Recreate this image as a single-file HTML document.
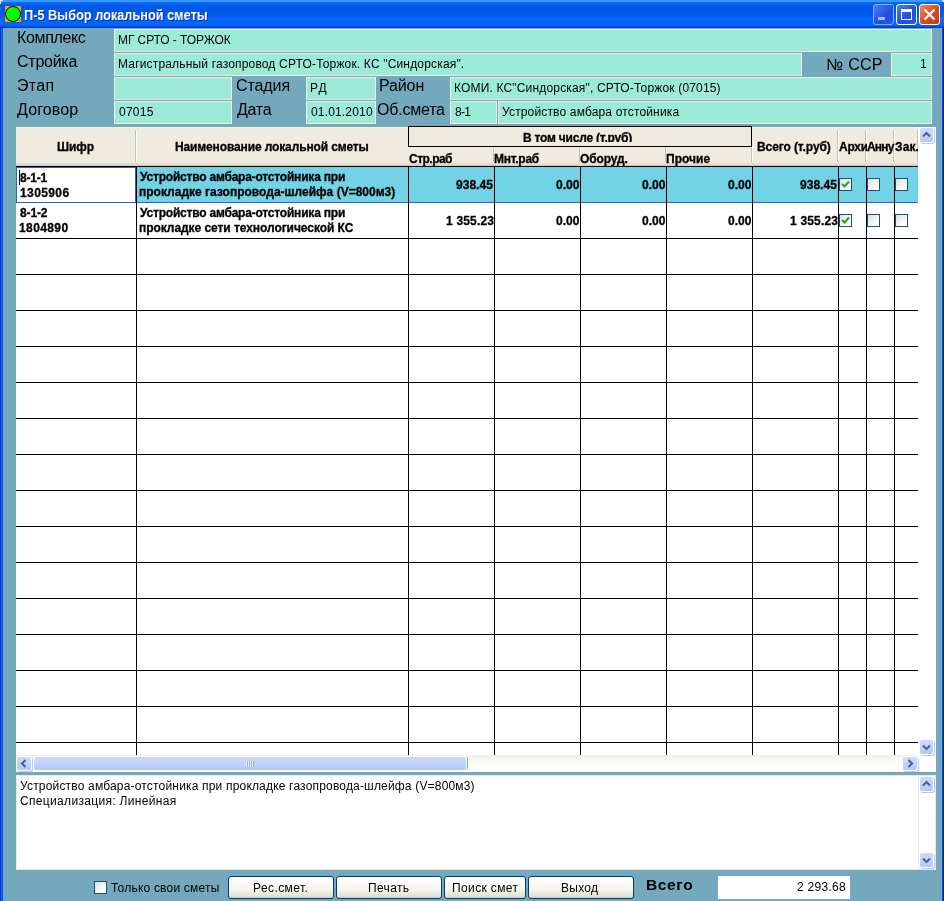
<!DOCTYPE html>
<html lang="ru"><head><meta charset="utf-8"><title>П-5 Выбор локальной сметы</title>
<style>
*{box-sizing:border-box;margin:0;padding:0}
html,body{width:944px;height:901px;overflow:hidden;background:#74a9bd}
body{position:relative;font-family:"Liberation Sans",sans-serif;font-size:12px;color:#000}
.abs,.abs *{position:absolute}
.t{position:absolute;white-space:pre;will-change:transform}
#title{left:0;top:0;width:944px;height:28px;background:linear-gradient(#3c96fd 0,#3c96fd 1.5px,#0270f8 2.5px,#0260ee 4px,#0058e4 6px,#0058e4 12px,#005cf0 15px,#0066fc 19px,#0066fc 25px,#0052e2 26.5px,#003cd0 27.5px,#003cd0 28px)}
#lb{left:0;top:28px;width:3px;height:873px;background:linear-gradient(90deg,#0428dc 0,#0428dc 1px,#0e6af0 1px,#0e6af0 2px,#0654e2 2px)}
#rb{left:942px;top:28px;width:2px;height:873px;background:linear-gradient(90deg,#0a45e0 0,#0a45e0 1px,#001ea8 1px)}
.fld{background:#9cebd7;border:1px solid #f0ece6;height:23px}
.tb{top:4px;width:21px;height:21px;border:1px solid #fff;border-radius:3px}
.vl{width:1px;background:#000}
.hl{height:1px;background:#000}
.cb{width:13px;height:13px;border:1px solid #1c5180;background:linear-gradient(135deg,#dcdcd7,#fff 75%)}
.btn{top:876px;height:23px;border:1px solid #003c74;border-radius:3px;background:linear-gradient(#fff,#f6f5f0 60%,#e4e1d6 90%,#d6d0c5)}
.sb{width:14px;height:14px;background:linear-gradient(#ccdafe,#c2d3fc 50%,#b1c7fa);border-radius:2px;box-shadow:0 0 0 1px #fff,1px 1px 0 1px #b4c9f3}
</style></head><body>

<div class="abs" id="title"></div><div class="abs" id="lb"></div><div class="abs" id="rb"></div>
<div class="abs" style="left:0;top:0;width:3px;height:1px;background:#d4e0f8"></div><div class="abs" style="left:0;top:1px;width:2px;height:1px;background:#d4e0f8"></div><div class="abs" style="left:0;top:2px;width:1px;height:2px;background:#d4e0f8"></div><div class="abs" style="left:942px;top:0;width:2px;height:1px;background:#d4e8f0"></div><div class="abs" style="left:943px;top:1px;width:1px;height:1px;background:#d4e8f0"></div>
<svg class="abs" style="left:5px;top:6px" width="16" height="16"><rect width="16" height="16" fill="#ff9a10"/><circle cx="8" cy="8" r="7.5" fill="#00ff00" stroke="#000" stroke-width="1"/></svg>
<div class="abs tb" style="left:873px;border-color:#8fabf5;background:linear-gradient(135deg,#4a80f8,#1c4ee0 60%,#2458ec)"><div style="left:4px;top:12px;width:7px;height:3px;background:#b0b8f0"></div></div>
<div class="abs tb" style="left:896px;background:linear-gradient(135deg,#4a80f8,#1c4ee0 60%,#2458ec)"><div style="left:4px;top:4px;width:11px;height:11px;border:1px solid #fff;border-top-width:3px"></div></div>
<div class="abs tb" style="left:919px;background:linear-gradient(135deg,#ee8a64,#de4a1e 55%,#c4340e)"><svg style="left:0;top:0" width="19" height="19"><path d="M4.5 4.5L14.5 14.5M14.5 4.5L4.5 14.5" stroke="#fff" stroke-width="2.2"/></svg></div>
<div class="abs fld" style="left:114px;top:29px;width:818px"></div>
<div class="abs fld" style="left:114px;top:53px;width:688px"></div>
<div class="abs fld" style="left:891px;top:53px;width:41px"></div>
<div class="abs fld" style="left:114px;top:77px;width:118px"></div>
<div class="abs fld" style="left:306px;top:77px;width:70px"></div>
<div class="abs fld" style="left:450px;top:77px;width:482px"></div>
<div class="abs fld" style="left:114px;top:101px;width:118px"></div>
<div class="abs fld" style="left:306px;top:101px;width:70px"></div>
<div class="abs fld" style="left:450px;top:101px;width:47px"></div>
<div class="abs fld" style="left:498px;top:101px;width:434px"></div>
<div class="abs" style="left:16px;top:127px;width:920px;height:645px;background:#fff"></div>
<div class="abs" style="left:16px;top:127px;width:902px;height:39px;background:linear-gradient(#faf4e0 0,#efebde 1px,#efebde 35px,#e3dece 37px,#cfc9b6 39px)"></div>
<div class="abs" style="left:137px;top:167px;width:781px;height:35px;background:#72d2e6"></div>
<div class="abs hl" style="left:16px;top:238px;width:902px"></div>
<div class="abs hl" style="left:16px;top:274px;width:902px"></div>
<div class="abs hl" style="left:16px;top:310px;width:902px"></div>
<div class="abs hl" style="left:16px;top:346px;width:902px"></div>
<div class="abs hl" style="left:16px;top:382px;width:902px"></div>
<div class="abs hl" style="left:16px;top:418px;width:902px"></div>
<div class="abs hl" style="left:16px;top:454px;width:902px"></div>
<div class="abs hl" style="left:16px;top:490px;width:902px"></div>
<div class="abs hl" style="left:16px;top:526px;width:902px"></div>
<div class="abs hl" style="left:16px;top:562px;width:902px"></div>
<div class="abs hl" style="left:16px;top:598px;width:902px"></div>
<div class="abs hl" style="left:16px;top:634px;width:902px"></div>
<div class="abs hl" style="left:16px;top:670px;width:902px"></div>
<div class="abs hl" style="left:16px;top:706px;width:902px"></div>
<div class="abs hl" style="left:16px;top:742px;width:902px"></div>
<div class="abs hl" style="left:16px;top:778px;width:902px"></div>
<div class="abs hl" style="left:16px;top:166px;width:902px"></div>
<div class="abs hl" style="left:16px;top:202px;width:902px;background:#2e5fd0"></div>
<div class="abs vl" style="left:136px;top:167px;height:588px"></div>
<div class="abs vl" style="left:408px;top:167px;height:588px"></div>
<div class="abs vl" style="left:494px;top:167px;height:588px"></div>
<div class="abs vl" style="left:580px;top:167px;height:588px"></div>
<div class="abs vl" style="left:666px;top:167px;height:588px"></div>
<div class="abs vl" style="left:752px;top:167px;height:588px"></div>
<div class="abs vl" style="left:838px;top:167px;height:588px"></div>
<div class="abs vl" style="left:866px;top:167px;height:588px"></div>
<div class="abs vl" style="left:894px;top:167px;height:588px"></div>
<div class="abs" style="left:135px;top:130px;width:2px;height:32px;border-left:1px solid #c5c2b2;border-right:1px solid #fff"></div>
<div class="abs" style="left:837px;top:130px;width:2px;height:32px;border-left:1px solid #c5c2b2;border-right:1px solid #fff"></div>
<div class="abs" style="left:865px;top:130px;width:2px;height:32px;border-left:1px solid #c5c2b2;border-right:1px solid #fff"></div>
<div class="abs" style="left:893px;top:130px;width:2px;height:32px;border-left:1px solid #c5c2b2;border-right:1px solid #fff"></div>
<div class="abs" style="left:917px;top:130px;width:2px;height:32px;border-left:1px solid #c5c2b2;border-right:1px solid #fff"></div>
<div class="abs" style="left:493px;top:147px;width:2px;height:15px;border-left:1px solid #c5c2b2;border-right:1px solid #fff"></div>
<div class="abs" style="left:579px;top:147px;width:2px;height:15px;border-left:1px solid #c5c2b2;border-right:1px solid #fff"></div>
<div class="abs" style="left:665px;top:147px;width:2px;height:15px;border-left:1px solid #c5c2b2;border-right:1px solid #fff"></div>
<div class="abs" style="left:751px;top:147px;width:2px;height:15px;border-left:1px solid #c5c2b2;border-right:1px solid #fff"></div>
<div class="abs" style="left:408px;top:126px;width:344px;height:21px;border:1px solid #000;background:#efebde"></div>
<div class="abs" style="left:16px;top:167px;width:120px;height:36px;background:#fff;border:1px solid #2e5fd0"></div>
<div class="abs" style="left:19px;top:170px;width:1px;height:15px;background:#000"></div>
<div class="abs cb" style="left:839px;top:178px"><svg style="left:1px;top:1px" width="9" height="9"><path d="M1 4L3.5 6.5L8 1.5" stroke="#21a121" stroke-width="2" fill="none"/></svg></div>
<div class="abs cb" style="left:867px;top:178px"></div>
<div class="abs cb" style="left:895px;top:178px"></div>
<div class="abs cb" style="left:839px;top:214px"><svg style="left:1px;top:1px" width="9" height="9"><path d="M1 4L3.5 6.5L8 1.5" stroke="#21a121" stroke-width="2" fill="none"/></svg></div>
<div class="abs cb" style="left:867px;top:214px"></div>
<div class="abs cb" style="left:895px;top:214px"></div>
<div class="abs" style="left:16px;top:755px;width:902px;height:17px;background:linear-gradient(#f1efe8,#fbfaf7 40%,#fff)"></div>
<div class="abs sb" style="left:920px;top:128px;width:13px;height:14px"><svg style="left:0;top:0" width="13" height="14"><path d="M3 8.5L6.5 5L10 8.5" stroke="#4d6185" stroke-width="2" fill="none"/></svg></div>
<div class="abs sb" style="left:920px;top:740px;width:13px;height:14px"><svg style="left:0;top:0" width="13" height="14"><path d="M3 5.5L6.5 9L10 5.5" stroke="#4d6185" stroke-width="2" fill="none"/></svg></div>
<div class="abs sb" style="left:17px;top:757px;width:14px;height:13px"><svg style="left:0;top:0" width="14" height="13"><path d="M8.5 3L5 6.5L8.5 10" stroke="#4d6185" stroke-width="2" fill="none"/></svg></div>
<div class="abs sb" style="left:903px;top:757px;width:14px;height:13px"><svg style="left:0;top:0" width="14" height="13"><path d="M5.5 3L9 6.5L5.5 10" stroke="#4d6185" stroke-width="2" fill="none"/></svg></div>
<div class="abs sb" style="left:34px;top:757px;width:432px;height:13px;box-shadow:0 0 0 1px #fff,2px 0 0 0 #86a4de"><div style="left:212px;top:4px;width:8px;height:6px;background:repeating-linear-gradient(90deg,#eef4fe 0 1px,#8cb0f8 1px 2px)"></div></div>
<div class="abs" style="left:16px;top:775px;width:920px;height:95px;background:#fff;border:1px solid #ece9d8"></div>
<div class="abs" style="left:918px;top:776px;width:1px;height:93px;background:#eeede5"></div>
<div class="abs sb" style="left:920px;top:777px;width:13px;height:14px"><svg style="left:0;top:0" width="13" height="14"><path d="M3 8.5L6.5 5L10 8.5" stroke="#4d6185" stroke-width="2" fill="none"/></svg></div>
<div class="abs sb" style="left:920px;top:853px;width:13px;height:14px"><svg style="left:0;top:0" width="13" height="14"><path d="M3 5.5L6.5 9L10 5.5" stroke="#4d6185" stroke-width="2" fill="none"/></svg></div>
<div class="abs cb" style="left:94px;top:881px"></div>
<div class="abs btn" style="left:228px;width:106px"></div>
<div class="abs btn" style="left:336px;width:106px"></div>
<div class="abs btn" style="left:444px;width:82px"></div>
<div class="abs btn" style="left:528px;width:106px"></div>
<div class="abs" style="left:718px;top:876px;width:132px;height:23px;background:#fff"></div>
<div class="t" style="left:23.62px;top:5.00px;font-size:14.5px;line-height:20px;font-weight:bold;color:#fff;text-shadow:1px 1px 0 #0a2b8c;transform:scaleX(0.8792);transform-origin:0 0">П-5 Выбор локальной сметы</div>
<div class="t" style="left:16.50px;top:28.00px;font-size:16px;line-height:20px;letter-spacing:-0.357px;">Комплекс</div>
<div class="t" style="left:16.80px;top:52.00px;font-size:16px;line-height:20px;letter-spacing:-0.250px;">Стройка</div>
<div class="t" style="left:16.50px;top:76.00px;font-size:16px;line-height:20px;letter-spacing:0.333px;">Этап</div>
<div class="t" style="left:17.30px;top:100.00px;font-size:16px;line-height:20px;letter-spacing:0.117px;">Договор</div>
<div class="t" style="left:235.70px;top:76.00px;font-size:16px;line-height:20px;letter-spacing:-0.100px;">Стадия</div>
<div class="t" style="left:236.90px;top:100.00px;font-size:16px;line-height:20px;letter-spacing:-0.300px;">Дата</div>
<div class="t" style="left:378.80px;top:76.00px;font-size:16px;line-height:20px;letter-spacing:-0.125px;">Район</div>
<div class="t" style="left:376.80px;top:100.00px;font-size:16px;line-height:20px;letter-spacing:-0.214px;">Об.смета</div>
<div class="t" style="left:825.80px;top:55.00px;font-size:16px;line-height:20px;letter-spacing:0.275px;">№ ССР</div>
<div class="t" style="left:117.75px;top:30.00px;font-size:12px;line-height:20px;letter-spacing:-0.083px;">МГ СРТО - ТОРЖОК</div>
<div class="t" style="left:117.50px;top:54.00px;font-size:12px;line-height:20px;letter-spacing:0.170px;">Магистральный газопровод СРТО-Торжок. КС "Синдорская".</div>
<div class="t" style="left:919.50px;top:54.00px;font-size:12px;line-height:20px;letter-spacing:-1.000px;">1</div>
<div class="t" style="left:309.50px;top:78.00px;font-size:12px;line-height:20px;letter-spacing:1.300px;">РД</div>
<div class="t" style="left:453.50px;top:78.00px;font-size:12px;line-height:20px;letter-spacing:0.169px;">КОМИ. КС"Синдорская", СРТО-Торжок (07015)</div>
<div class="t" style="left:118.50px;top:102.00px;font-size:12px;line-height:20px;letter-spacing:0.250px;">07015</div>
<div class="t" style="left:310.50px;top:102.00px;font-size:12px;line-height:20px;letter-spacing:0.167px;">01.01.2010</div>
<div class="t" style="left:454.50px;top:102.00px;font-size:12px;line-height:20px;letter-spacing:-0.750px;">8-1</div>
<div class="t" style="left:502.20px;top:102.00px;font-size:12px;line-height:20px;letter-spacing:0.156px;">Устройство амбара отстойника</div>
<div class="t" style="left:56.50px;top:137.00px;font-size:12px;line-height:20px;font-weight:bold;-webkit-text-stroke:0.3px #000;letter-spacing:-0.083px;">Шифр</div>
<div class="t" style="left:174.50px;top:137.00px;font-size:12px;line-height:20px;font-weight:bold;-webkit-text-stroke:0.3px #000;letter-spacing:-0.130px;">Наименование локальной сметы</div>
<div class="abs" style="left:409px;top:127px;width:342px;height:15px;overflow:hidden"><div class="t" style="left:113.80px;top:1.00px;font-size:12px;line-height:20px;font-weight:bold;-webkit-text-stroke:0.3px #000;letter-spacing:-0.211px;">В том числе (т.руб)</div></div>
<div class="abs" style="left:408px;top:147px;width:86px;height:19px;overflow:hidden"><div class="t" style="left:0.60px;top:2.00px;font-size:12px;line-height:20px;font-weight:bold;-webkit-text-stroke:0.3px #000;letter-spacing:-0.517px;">Стр.раб</div></div>
<div class="abs" style="left:494px;top:147px;width:86px;height:19px;overflow:hidden"><div class="t" style="left:-0.20px;top:2.00px;font-size:12px;line-height:20px;font-weight:bold;-webkit-text-stroke:0.3px #000;letter-spacing:-0.267px;">Мнт.раб</div></div>
<div class="abs" style="left:580px;top:147px;width:86px;height:19px;overflow:hidden"><div class="t" style="left:0.40px;top:2.00px;font-size:12px;line-height:20px;font-weight:bold;-webkit-text-stroke:0.3px #000;letter-spacing:-0.117px;">Оборуд.</div></div>
<div class="abs" style="left:666px;top:147px;width:86px;height:19px;overflow:hidden"><div class="t" style="left:-0.40px;top:2.00px;font-size:12px;line-height:20px;font-weight:bold;-webkit-text-stroke:0.3px #000;letter-spacing:0.020px;">Прочие</div></div>
<div class="t" style="left:757.40px;top:137.00px;font-size:12px;line-height:20px;font-weight:bold;-webkit-text-stroke:0.3px #000;letter-spacing:-0.092px;">Всего (т.руб)</div>
<div class="abs" style="left:838px;top:127px;width:29px;height:39px;overflow:hidden"><div class="t" style="left:1.20px;top:10.00px;font-size:12px;line-height:20px;font-weight:bold;-webkit-text-stroke:0.3px #000;letter-spacing:-0.267px;">Архи</div></div>
<div class="abs" style="left:867px;top:127px;width:28px;height:39px;overflow:hidden"><div class="t" style="left:0.40px;top:10.00px;font-size:12px;line-height:20px;font-weight:bold;-webkit-text-stroke:0.3px #000;letter-spacing:-0.800px;">Анну</div></div>
<div class="abs" style="left:895px;top:127px;width:23px;height:39px;overflow:hidden"><div class="t" style="left:-0.50px;top:10.00px;font-size:12px;line-height:20px;font-weight:bold;-webkit-text-stroke:0.3px #000;letter-spacing:0.133px;">Зак.</div></div>
<div class="t" style="left:20.30px;top:168.00px;font-size:12px;line-height:20px;font-weight:bold;-webkit-text-stroke:0.3px #000;letter-spacing:-0.200px;">8-1-1</div>
<div class="t" style="left:19.60px;top:183.00px;font-size:12px;line-height:20px;font-weight:bold;-webkit-text-stroke:0.3px #000;letter-spacing:0.400px;">1305906</div>
<div class="t" style="left:19.50px;top:203.00px;font-size:12px;line-height:20px;font-weight:bold;-webkit-text-stroke:0.3px #000;letter-spacing:-0.125px;">8-1-2</div>
<div class="t" style="left:18.80px;top:218.00px;font-size:12px;line-height:20px;font-weight:bold;-webkit-text-stroke:0.3px #000;letter-spacing:0.400px;">1804890</div>
<div class="t" style="left:139.50px;top:167.00px;font-size:12px;line-height:20px;font-weight:bold;-webkit-text-stroke:0.3px #000;letter-spacing:-0.206px;">Устройство амбара-отстойника при</div>
<div class="t" style="left:138.50px;top:182.00px;font-size:12px;line-height:20px;font-weight:bold;-webkit-text-stroke:0.3px #000;letter-spacing:0.008px;">прокладке газопровода-шлейфа (V=800м3)</div>
<div class="t" style="left:139.50px;top:203.00px;font-size:12px;line-height:20px;font-weight:bold;-webkit-text-stroke:0.3px #000;letter-spacing:-0.206px;">Устройство амбара-отстойника при</div>
<div class="t" style="left:138.50px;top:218.00px;font-size:12px;line-height:20px;font-weight:bold;-webkit-text-stroke:0.3px #000;letter-spacing:-0.056px;">прокладке сети технологической КС</div>
<div class="t" style="left:456.10px;top:175.00px;font-size:12px;line-height:20px;font-weight:bold;-webkit-text-stroke:0.3px #000;letter-spacing:0.020px;">938.45</div>
<div class="t" style="left:556.10px;top:175.00px;font-size:12px;line-height:20px;font-weight:bold;-webkit-text-stroke:0.3px #000;letter-spacing:0.033px;">0.00</div>
<div class="t" style="left:642.10px;top:175.00px;font-size:12px;line-height:20px;font-weight:bold;-webkit-text-stroke:0.3px #000;letter-spacing:0.033px;">0.00</div>
<div class="t" style="left:728.10px;top:175.00px;font-size:12px;line-height:20px;font-weight:bold;-webkit-text-stroke:0.3px #000;letter-spacing:0.033px;">0.00</div>
<div class="t" style="left:800.10px;top:175.00px;font-size:12px;line-height:20px;font-weight:bold;-webkit-text-stroke:0.3px #000;letter-spacing:0.020px;">938.45</div>
<div class="t" style="left:445.90px;top:211.00px;font-size:12px;line-height:20px;font-weight:bold;-webkit-text-stroke:0.3px #000;letter-spacing:0.186px;">1 355.23</div>
<div class="t" style="left:556.10px;top:211.00px;font-size:12px;line-height:20px;font-weight:bold;-webkit-text-stroke:0.3px #000;letter-spacing:0.033px;">0.00</div>
<div class="t" style="left:642.10px;top:211.00px;font-size:12px;line-height:20px;font-weight:bold;-webkit-text-stroke:0.3px #000;letter-spacing:0.033px;">0.00</div>
<div class="t" style="left:728.10px;top:211.00px;font-size:12px;line-height:20px;font-weight:bold;-webkit-text-stroke:0.3px #000;letter-spacing:0.033px;">0.00</div>
<div class="t" style="left:789.90px;top:211.00px;font-size:12px;line-height:20px;font-weight:bold;-webkit-text-stroke:0.3px #000;letter-spacing:0.186px;">1 355.23</div>
<div class="t" style="left:20.20px;top:776.00px;font-size:12px;line-height:20px;letter-spacing:0.179px;">Устройство амбара-отстойника при прокладке газопровода-шлейфа (V=800м3)</div>
<div class="t" style="left:19.80px;top:791.00px;font-size:12px;line-height:20px;letter-spacing:0.327px;">Специализация: Линейная</div>
<div class="t" style="left:110.60px;top:878.00px;font-size:12px;line-height:20px;letter-spacing:0.206px;">Только свои сметы</div>
<div class="t" style="left:252.60px;top:878.00px;font-size:12px;line-height:20px;letter-spacing:0.425px;">Рес.смет.</div>
<div class="t" style="left:367.60px;top:878.00px;font-size:12px;line-height:20px;letter-spacing:0.340px;">Печать</div>
<div class="t" style="left:451.60px;top:878.00px;font-size:12px;line-height:20px;letter-spacing:0.378px;">Поиск смет</div>
<div class="t" style="left:561.00px;top:878.00px;font-size:12px;line-height:20px;letter-spacing:0.250px;">Выход</div>
<div class="t" style="left:646.30px;top:875.00px;font-size:15.5px;line-height:20px;font-weight:bold;letter-spacing:0.625px;">Всего</div>
<div class="t" style="left:796.80px;top:877.00px;font-size:12px;line-height:20px;letter-spacing:0.286px;">2 293.68</div>
</body></html>
